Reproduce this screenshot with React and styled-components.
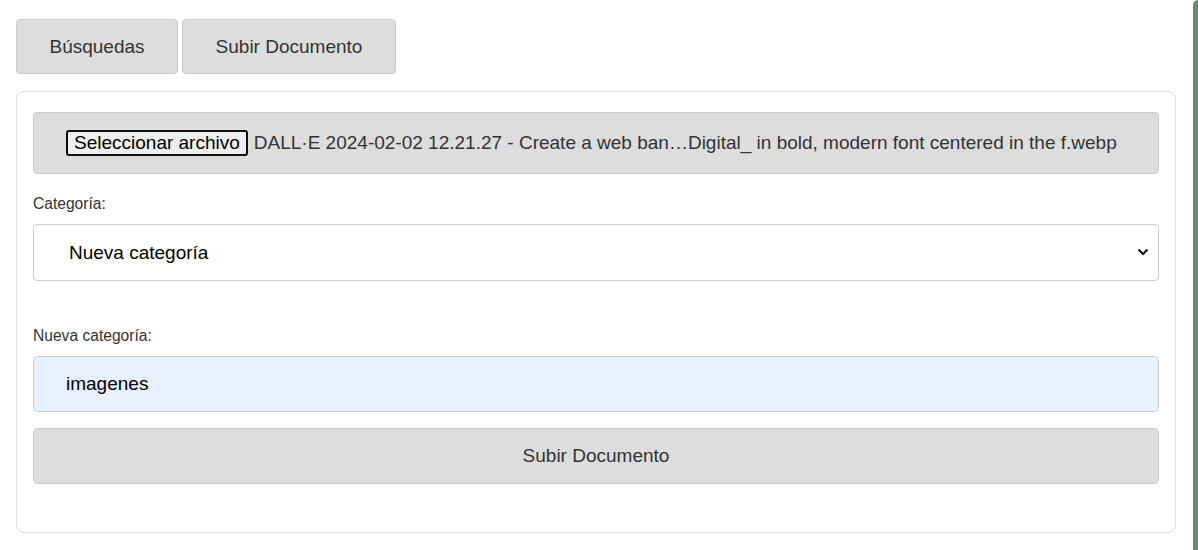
import React, { useState } from "react";
import styled, { createGlobalStyle } from "styled-components";

const GlobalStyle = createGlobalStyle`
  html, body {
    margin: 0;
    padding: 0;
    background: #ffffff;
    font-family: "Liberation Sans", Arial, sans-serif;
  }
  * { box-sizing: border-box; }
`;

const Page = styled.div`
  display: flex;
  min-height: 550px;
`;

const Main = styled.main`
  flex: 1;
  padding: 19px 17px 16px 16px;
`;

const SidePanel = styled.aside`
  width: 5px;
  background: #6b8d6f;
  border-top-left-radius: 8px;
`;

const Tabs = styled.nav`
  display: flex;
  gap: 4px;
  margin-bottom: 17px;
`;

const TabButton = styled.button`
  height: 55px;
  padding: 0 ${(p) => p.$pad}px;
  background: #dddddd;
  border: 1px solid #cccccc;
  border-radius: 4px;
  color: #333333;
  font-family: inherit;
  font-size: 19px;
  cursor: pointer;
`;

const Card = styled.section`
  border: 1px solid #dddddd;
  border-radius: 8px;
  padding: 20px 16px 48px 16px;
  display: flex;
  flex-direction: column;
`;

const FileBox = styled.div`
  height: 62px;
  display: flex;
  align-items: center;
  gap: 6px;
  padding: 0 32px;
  background: #dddddd;
  border: 1px solid #cccccc;
  border-radius: 4px;
  color: #333333;
  font-size: 19px;
  white-space: nowrap;
  overflow: hidden;
`;

const FileButton = styled.span`
  display: inline-flex;
  align-items: center;
  height: 26px;
  padding: 0 6px;
  background: #efefef;
  border: 2px solid #101010;
  border-radius: 3px;
  color: #000000;
`;

const Label = styled.label`
  display: block;
  font-size: 15.6px;
  color: #333333;
  margin: ${(p) => p.$top}px 0 11px;
`;

const SelectWrap = styled.div`
  position: relative;
`;

const Select = styled.select`
  width: 100%;
  height: 57px;
  padding: 0 35px;
  appearance: none;
  background: #ffffff;
  border: 1px solid #cccccc;
  border-radius: 4px;
  color: #000000;
  font-family: inherit;
  font-size: 19px;
`;

const Chevron = styled.svg`
  position: absolute;
  right: 10px;
  top: 24px;
  pointer-events: none;
`;

const TextInput = styled.input`
  width: 100%;
  height: 56px;
  padding: 0 32px;
  background: #e8f0fe;
  border: 1px solid #cccccc;
  border-radius: 4px;
  color: #000000;
  font-family: inherit;
  font-size: 19px;
  outline: none;
`;

const SubmitButton = styled.button`
  width: 100%;
  height: 56px;
  margin-top: 16px;
  background: #dddddd;
  border: 1px solid #cccccc;
  border-radius: 4px;
  color: #333333;
  font-family: inherit;
  font-size: 19px;
  cursor: pointer;
`;

export default function App() {
  const [category, setCategory] = useState("nueva");
  const [newCategory, setNewCategory] = useState("imagenes");

  return (
    <>
      <GlobalStyle />
      <Page>
        <Main>
          <Tabs>
            <TabButton $pad={32.5}>Búsquedas</TabButton>
            <TabButton $pad={32.5}>Subir Documento</TabButton>
          </Tabs>
          <Card>
            <FileBox>
              <FileButton>Seleccionar archivo</FileButton>
              <span>
                DALL·E 2024-02-02 12.21.27 - Create a web ban…Digital_ in bold,
                modern font centered in the f.webp
              </span>
            </FileBox>

            <Label $top={21}>Categoría:</Label>
            <SelectWrap>
              <Select
                value={category}
                onChange={(e) => setCategory(e.target.value)}
              >
                <option value="nueva">Nueva categoría</option>
              </Select>
              <Chevron width="12" height="8" viewBox="0 0 12 8">
                <path
                  d="M1.5 1.5 L6 6 L10.5 1.5"
                  fill="none"
                  stroke="#111"
                  strokeWidth="2.2"
                />
              </Chevron>
            </SelectWrap>

            <Label $top={46}>Nueva categoría:</Label>
            <TextInput
              value={newCategory}
              onChange={(e) => setNewCategory(e.target.value)}
            />
            <SubmitButton>Subir Documento</SubmitButton>
          </Card>
        </Main>
        <SidePanel />
      </Page>
    </>
  );
}
